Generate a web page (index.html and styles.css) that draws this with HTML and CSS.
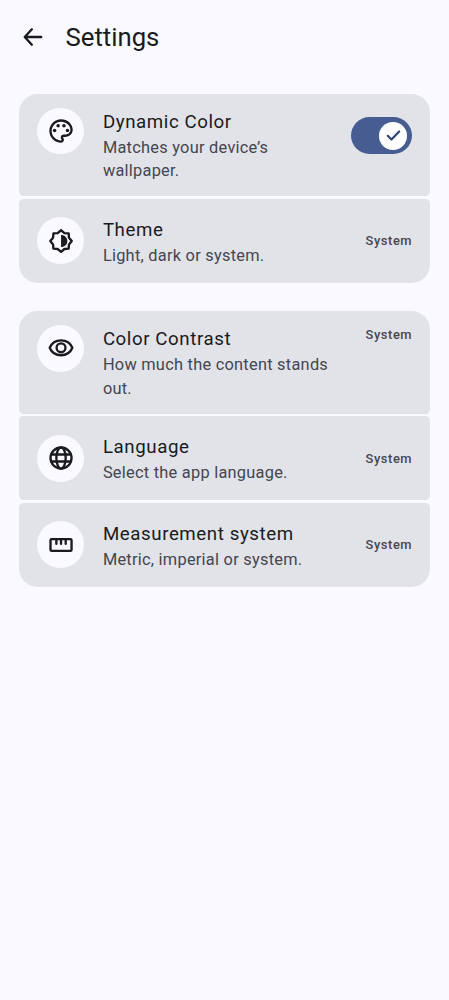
FILE: index.html
```html
<!DOCTYPE html>
<html lang="en">
<head>
<meta charset="utf-8">
<title>Settings</title>
<link rel="stylesheet" href="styles.css">
</head>
<body>
<header class="bar">
  <svg class="icon" viewBox="0 0 24 24"><path class="line" d="M19 12H5.2M11 5.4L4.9 12l6.1 6.6"/></svg>
  <h1 class="bar-title">Settings</h1>
</header>
<main class="groups">
  <section class="group">
    <div class="item tall">
      <span class="badge"><svg class="icon" viewBox="0 0 24 24"><path d="M12 22C6.49 22 2 17.51 2 12S6.49 2 12 2s10 4.04 10 9c0 3.31-2.69 6-6 6h-1.77c-.28 0-.5.22-.5.5 0 .12.05.23.13.33.41.47.64 1.06.64 1.67 0 1.38-1.12 2.5-2.5 2.5zm0-18c-4.41 0-8 3.59-8 8s3.59 8 8 8c.28 0 .5-.22.5-.5 0-.16-.08-.28-.14-.35-.41-.46-.63-1.05-.63-1.65 0-1.38 1.12-2.5 2.5-2.5H16c2.21 0 4-1.79 4-4 0-3.86-3.59-7-8-7z"/><circle cx="6.5" cy="11.5" r="1.5"/><circle cx="9.5" cy="7.5" r="1.5"/><circle cx="14.5" cy="7.5" r="1.5"/><circle cx="17.5" cy="11.5" r="1.5"/></svg></span>
      <div class="text"><h2 class="name">Dynamic Color</h2><p class="desc">Matches your device’s wallpaper.</p></div>
      <span class="switch"><span class="thumb"><svg class="check" viewBox="0 0 24 24"><path class="line" d="M4.8 12.6l4.7 4.7L19.5 7"/></svg></span></span>
    </div>
    <div class="item">
      <span class="badge"><svg class="icon" viewBox="0 0 24 24"><path class="line" d="M12 2.8l2.9 2.4 3.6.3.3 3.6 2.4 2.9-2.4 2.9-.3 3.6-3.6.3-2.9 2.4-2.9-2.4-3.6-.3-.3-3.6L2.8 12l2.4-2.9.3-3.6 3.6-.3z"/><path d="M12 6.8c3.2 0 5.4 2.3 5.4 5.2s-2.2 5.2-5.4 5.2z"/></svg></span>
      <div class="text"><h2 class="name">Theme</h2><p class="desc">Light, dark or system.</p></div>
      <span class="value">System</span>
    </div>
  </section>
  <section class="group">
    <div class="item tall">
      <span class="badge"><svg class="icon" viewBox="0 0 24 24"><path class="line" d="M2.3 11.8C3.9 7.9 7.6 5.4 12 5.4s8.1 2.5 9.7 6.4C20.1 15.7 16.4 18.2 12 18.2s-8.1-2.5-9.7-6.4z"/><circle class="line" cx="12" cy="11.8" r="3.8"/></svg></span>
      <div class="text"><h2 class="name">Color Contrast</h2><p class="desc">How much the content stands out.</p></div>
      <span class="value">System</span>
    </div>
    <div class="item">
      <span class="badge"><svg class="icon" viewBox="0 0 24 24"><circle class="line" cx="12" cy="12" r="9"/><ellipse class="line" cx="12" cy="12" rx="4" ry="9"/><path class="line" d="M3.6 9h16.8M3.6 15h16.8"/></svg></span>
      <div class="text"><h2 class="name">Language</h2><p class="desc">Select the app language.</p></div>
      <span class="value">System</span>
    </div>
    <div class="item">
      <span class="badge"><svg class="icon" viewBox="0 0 24 24"><rect class="line" x="3" y="7" width="18" height="10" rx="1"/><path class="line" d="M8 7.5V11M12 7.5V11M16 7.5V11"/></svg></span>
      <div class="text"><h2 class="name">Measurement system</h2><p class="desc">Metric, imperial or system.</p></div>
      <span class="value">System</span>
    </div>
  </section>
</main>
</body>
</html>
```
FILE: styles.css
```css
/* 1rem equals ten density-independent units */
html { font-size: 11.693px; }
* { box-sizing: border-box; margin: 0; padding: 0; }
body {
  min-height: 100vh;
  background: #f9f9ff;
  color: #1a1b20;
  font-family: Roboto, sans-serif;
}
.bar {
  display: flex;
  align-items: center;
  gap: 1.6rem;
  height: 6.4rem;
  padding: 0 1.6rem;
}
.bar-title { font-size: 2.2rem; font-weight: 400; line-height: 2.8rem; }
.icon { display: block; flex: none; width: 2.4rem; height: 2.4rem; fill: #1a1b20; stroke: #1a1b20; stroke-width: 0; }
.line { fill: none; stroke-width: 2; stroke-linecap: round; stroke-linejoin: round; }
.groups { display: flex; flex-direction: column; gap: 2.4rem; padding: 1.6rem; }
.group { display: flex; flex-direction: column; gap: .2rem; border-radius: 1.6rem; overflow: hidden; }
.item {
  display: flex;
  align-items: center;
  gap: 1.6rem;
  height: 7.2rem;
  padding: 0 1.6rem;
  border-radius: .4rem;
  background: #e2e2e9;
}
.tall { height: 8.8rem; align-items: flex-start; padding-top: 1.2rem; }
.badge {
  display: flex;
  flex: none;
  align-items: center;
  justify-content: center;
  width: 4rem;
  height: 4rem;
  border-radius: 50%;
  background: #f9f9ff;
}
.text { flex: 1; min-width: 0; padding-top: .08rem; }
.tall .text { padding-top: .03rem; }
.name { font-size: 1.6rem; font-weight: 400; line-height: 2.4rem; letter-spacing: .05rem; }
.desc { color: #45464f; font-size: 1.4rem; line-height: 2rem; letter-spacing: .022rem; }
.value { margin-right: -.05rem; padding-top: .14rem; color: #45464f; font-size: 1.1rem; font-weight: 500; line-height: 1.6rem; letter-spacing: .05rem; }
.tall .value { padding-top: .07rem; }
.switch {
  display: flex;
  align-items: center;
  justify-content: flex-end;
  width: 5.2rem;
  height: 3.2rem;
  margin-top: .8rem;
  padding: .4rem;
  border-radius: 1.6rem;
  background: #475d92;
}
.thumb { display: flex; align-items: center; justify-content: center; width: 2.4rem; height: 2.4rem; border-radius: 50%; background: #fff; }
.check { width: 1.6rem; height: 1.6rem; stroke: #2f4578; }
.check .line { stroke-width: 2.8; }
```
